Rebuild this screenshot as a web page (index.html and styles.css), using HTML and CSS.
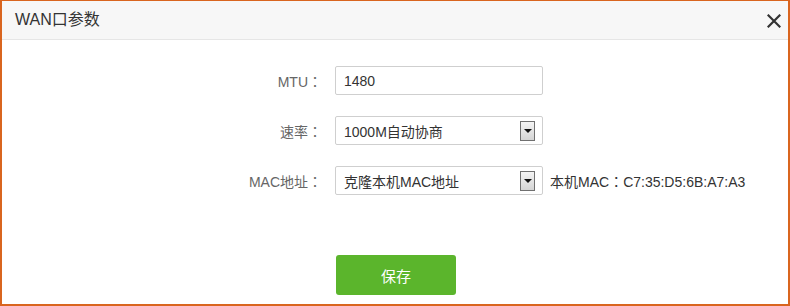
FILE: index.html
```html
<!DOCTYPE html>
<html>
<head>
<meta charset="utf-8">
<link rel="stylesheet" href="styles.css">
</head>
<body>
<div class="dialog">
  <div class="header">
    <span class="title">WAN口参数</span>
    <svg class="close" width="14" height="14" viewBox="0 0 14 14"><path d="M1.5 1.5 L12.5 12.5 M12.5 1.5 L1.5 12.5" stroke="#333" stroke-width="2.2" stroke-linecap="square"/></svg>
  </div>
  <div class="body">
    <div class="row">
      <label class="label">MTU<span class="colon">：</span></label>
      <div class="field input">1480</div>
    </div>
    <div class="row">
      <label class="label">速率<span class="colon">：</span></label>
      <div class="field select"><span>1000M自动协商</span><span class="arrow"></span></div>
    </div>
    <div class="row">
      <label class="label">MAC地址<span class="colon">：</span></label>
      <div class="field select"><span>克隆本机MAC地址</span><span class="arrow"></span></div>
      <span class="note">本机MAC<span class="colon">：</span>C7:35:D5:6B:A7:A3</span>
    </div>
    <div class="actions">
      <button class="save">保存</button>
    </div>
  </div>
</div>
</body>
</html>
```

FILE: styles.css
```css
* { box-sizing: border-box; }
html, body { margin: 0; padding: 0; background: #fff; }
body {
  font-family: "Liberation Sans", "Noto Sans CJK SC", sans-serif;
  color: #333;
}
.dialog {
  width: 790px;
  height: 306px;
  border-left: 2px solid #d9651f;
  border-top: 1px solid #d9651f;
  border-right: 2px solid #d9651f;
  border-bottom: 2px solid #d9651f;
  background: #fff;
  overflow: hidden;
}
.header {
  height: 39px;
  background: #f7f7f7;
  border-bottom: 1px solid #e6e6e6;
  display: flex;
  align-items: center;
  justify-content: space-between;
  padding: 0 7px 0 13px;
}
.title {
  font-size: 16px;
  color: #333;
  margin-top: -4px;
}
.close { display: block; margin-top: 2px; }
.body {
  padding-top: 26px;
}
.row {
  display: flex;
  align-items: center;
  height: 29px;
  margin-bottom: 21px;
}
.label {
  width: 320px;
  text-align: right;
  font-size: 14px;
  color: #666;
  margin-right: 13px;
}
.colon {
  font-family: "Noto Sans CJK TC", sans-serif;
}
.field {
  width: 208px;
  height: 29px;
  border: 1px solid #cfcfcf;
  border-radius: 2px;
  font-size: 14px;
  color: #333;
  display: flex;
  align-items: center;
  padding-left: 8px;
}
.select {
  justify-content: space-between;
  padding-right: 7px;
}
.arrow {
  width: 15px;
  height: 20px;
  border: 1px solid #707070;
  background: linear-gradient(#f4f4f4, #d4d4d4);
  position: relative;
}
.arrow::after {
  content: "";
  position: absolute;
  left: 3px;
  top: 7px;
  border-left: 4px solid transparent;
  border-right: 4px solid transparent;
  border-top: 4px solid #111;
}
.note {
  margin-left: 7px;
  font-size: 14px;
  color: #333;
}
.actions {
  padding-left: 334px;
  padding-top: 39px;
}
.save {
  width: 120px;
  height: 40px;
  border: none;
  border-radius: 3px;
  background: #5bb52c;
  color: #fff;
  font-size: 15px;
  font-family: "Liberation Sans", "Noto Sans CJK SC", sans-serif;
}
```
